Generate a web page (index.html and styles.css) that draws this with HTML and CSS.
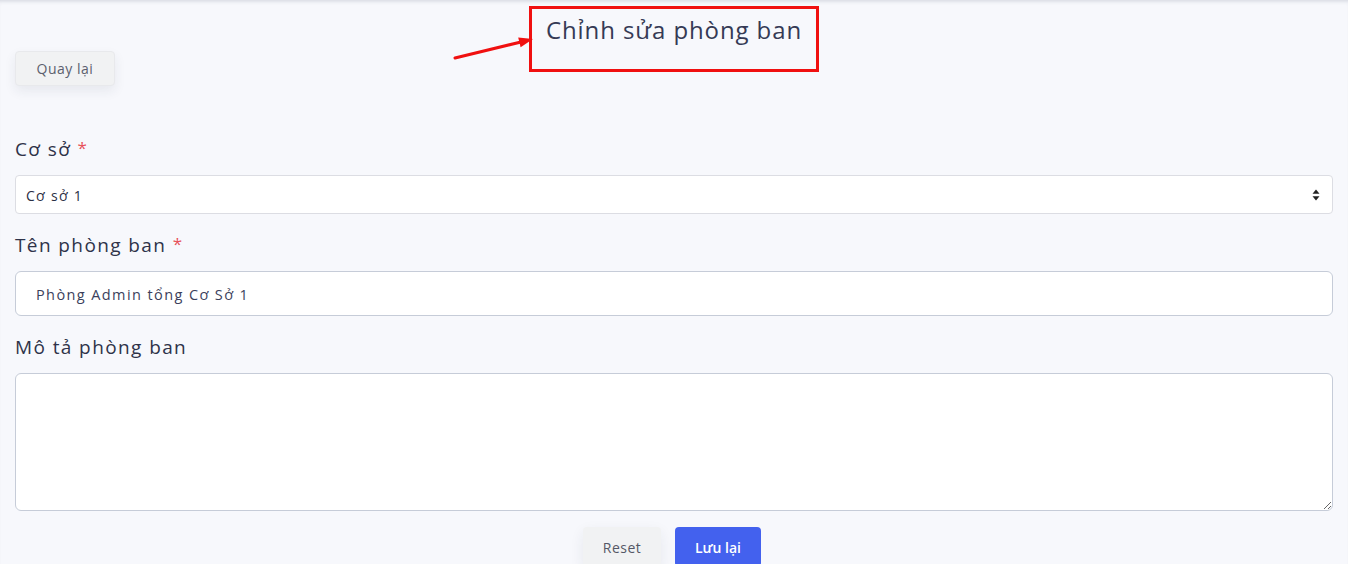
FILE: index.html
```html
<!DOCTYPE html>
<html lang="vi">
<head>
<meta charset="utf-8">
<title>Chỉnh sửa phòng ban</title>
<link rel="stylesheet" href="styles.css">
</head>
<body>
<div class="page">
  <header class="header">
    <div class="header-left">
      <button class="btn btn-light">Quay lại</button>
    </div>
    <div class="header-center">
      <h1 class="title">Chỉnh sửa phòng ban</h1>
    </div>
    <div class="header-right"></div>
    <svg class="arrow" width="90" height="32" viewBox="0 0 90 32">
      <line x1="5" y1="25" x2="71" y2="9" stroke="#f01010" stroke-width="3" stroke-linecap="round"/>
      <polygon points="83,6 70.6,14.2 68.2,4.4" fill="#f01010"/>
    </svg>
  </header>

  <form class="form">
    <div class="field">
      <label class="label">Cơ sở <span class="req">*</span></label>
      <div class="select">
        <span>Cơ sở 1</span>
        <svg width="8" height="12" viewBox="0 0 8 12" class="select-icon">
          <polygon points="4,0.5 7.5,4.8 0.5,4.8" fill="#222"/>
          <polygon points="4,11.5 7.5,7.2 0.5,7.2" fill="#222"/>
        </svg>
      </div>
    </div>
    <div class="field">
      <label class="label">Tên phòng ban <span class="req">*</span></label>
      <div class="input">Phòng Admin tổng Cơ Sở 1</div>
    </div>
    <div class="field">
      <label class="label">Mô tả phòng ban</label>
      <textarea class="textarea"></textarea>
    </div>
    <div class="actions">
      <button type="button" class="btn btn-reset">Reset</button>
      <button type="button" class="btn btn-primary">Lưu lại</button>
    </div>
  </form>
</div>
</body>
</html>
```

FILE: styles.css
```css
* { box-sizing: border-box; }
html, body {
  margin: 0;
  padding: 0;
  background: #f7f8fc;
  font-family: "Open Sans", "Noto Sans", sans-serif;
  color: #3b3f5c;
}
.page {
  min-height: 564px;
  box-shadow: inset 0 4px 4px -3px rgba(40, 50, 80, 0.18);
  padding: 0 15px;
}
.header {
  position: relative;
  display: grid;
  grid-template-columns: 1fr auto 1fr;
  align-items: start;
}
.header-left { padding-top: 51px; }
.header-center { padding-top: 6px; }
.title {
  margin: 0;
  border: 3px solid #f01010;
  width: 290px;
  height: 66px;
  padding: 5px 0 0 0;
  font-size: 24px;
  font-weight: 500;
  line-height: 31px;
  letter-spacing: 0.9px;
  text-align: center;
  color: #353a55;
}
.arrow {
  position: absolute;
  left: 435px;
  top: 33px;
}
.btn {
  font-family: inherit;
  font-size: 14px;
  border: none;
  border-radius: 4px;
  cursor: pointer;
  letter-spacing: 0.5px;
}
.btn-light {
  width: 100px;
  height: 35px;
  background: #f1f2f3;
  color: #5c5f6e;
  border: 1px solid #e8e9ec;
  box-shadow: 0 5px 12px rgba(40, 50, 80, 0.08);
}
.form {
  padding-top: 50px;
}
.field { margin-bottom: 18px; }
.label {
  display: block;
  font-size: 19px;
  font-weight: 500;
  line-height: 27px;
  margin-bottom: 12px;
  letter-spacing: 1.4px;
  color: #2f3349;
}
.req {
  color: #e7515a;
  font-size: 17px;
  position: relative;
  top: -2px;
}
.select {
  height: 39px;
  background: #fff;
  border: 1px solid #dcdde3;
  border-radius: 4px;
  padding: 0 12px 0 10px;
  display: flex;
  align-items: center;
  justify-content: space-between;
  font-size: 14px;
  color: #2a2e45;
  letter-spacing: 1.3px;
  padding-top: 1px;
}
.select-icon { margin-top: 0; }
.input {
  height: 45px;
  background: #fff;
  border: 1px solid #c6ccd8;
  border-radius: 6px;
  padding: 0 20px;
  display: flex;
  align-items: center;
  font-size: 14.5px;
  color: #3b3f5c;
  letter-spacing: 1.4px;
  padding-top: 1px;
}
.textarea {
  display: block;
  width: 100%;
  height: 138px;
  background: #fff;
  border: 1px solid #c6ccd8;
  border-radius: 6px;
  resize: vertical;
  font-family: inherit;
  margin: 0;
}
.actions {
  display: flex;
  justify-content: center;
  gap: 14px;
  margin-top: -2px;
  padding-right: 4px;
}
.btn-reset {
  width: 78px;
  height: 40px;
  background: #f1f2f3;
  color: #555866;
  box-shadow: 0 5px 14px rgba(40, 50, 80, 0.08);
}
.btn-primary {
  width: 86px;
  height: 40px;
  background: #4361ee;
  color: #fff;
  font-weight: 600;
  letter-spacing: 0;
}
```
